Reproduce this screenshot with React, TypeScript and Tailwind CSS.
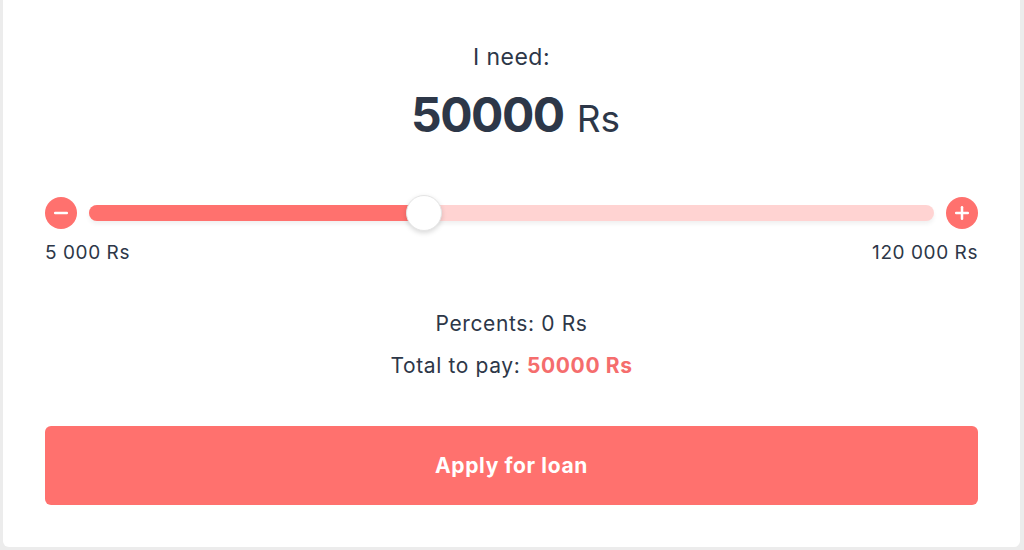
import { Minus, Plus } from "lucide-react";
import { useState } from "react";

const MIN = 5000;
const MAX = 120000;

const App = () => {
  const [amount, setAmount] = useState(50000);
  const pct = ((amount - MIN) / (MAX - MIN)) * 100;

  const step = (d: number) =>
    setAmount((a) => Math.min(MAX, Math.max(MIN, a + d)));

  return (
    <div className="min-h-[550px] bg-[#ececec] pl-[3px] pr-[4px] pb-[3px] font-['Inter',sans-serif] text-[#2d3748]">
      <div className="flex h-[547px] flex-col rounded-b-md bg-white px-[42px] pt-[43px]">
        {/* Amount */}
        <p className="text-center text-[23px] leading-[28px] tracking-[0.02em]">I need:</p>
        <p className="mt-[16px] pl-[8px] text-center leading-[56px]">
          <span className="text-[48px] font-bold tracking-[-1.5px]">{amount}</span>
          <span className="ml-[13px] text-[37px]">Rs</span>
        </p>

        {/* Slider */}
        <div className="mt-[41px] flex h-[36px] items-center gap-3">
          <button
            onClick={() => step(-5000)}
            className="flex h-8 w-8 shrink-0 items-center justify-center rounded-full bg-[#ff716e] text-white"
          >
            <Minus size={20} strokeWidth={3} />
          </button>
          <div className="relative h-4 flex-1 rounded-full bg-[#ffd3d2] shadow-[0_3px_4px_rgba(0,0,0,0.06)]">
            <div
              className="h-4 rounded-full bg-[#ff716e]"
              style={{ width: `calc(${pct}% + 4px)` }}
            />
            <div
              className="absolute top-1/2 h-[36px] w-[36px] -translate-x-1/2 -translate-y-1/2 rounded-full border border-[#e5e5e5] bg-white shadow-[0_2px_5px_rgba(0,0,0,0.15)]"
              style={{ left: `calc(${pct}% + 4px)` }}
            />
          </div>
          <button
            onClick={() => step(5000)}
            className="flex h-8 w-8 shrink-0 items-center justify-center rounded-full bg-[#ff716e] text-white"
          >
            <Plus size={20} strokeWidth={3} />
          </button>
        </div>
        <div className="mt-[10px] flex justify-between text-[19px] leading-[24px] tracking-[0.03em]">
          <span>5 000 Rs</span>
          <span>120 000 Rs</span>
        </div>

        {/* Summary */}
        <p className="mt-[45px] text-center text-[21px] leading-[28px] tracking-[0.03em]">
          Percents: 0 Rs
        </p>
        <p className="mt-[14px] text-center text-[21px] leading-[28px] tracking-[0.03em]">
          Total to pay:{" "}
          <span className="font-bold text-[#f56d6d]">{amount} Rs</span>
        </p>

        <button className="mt-[46px] h-[79px] w-full rounded-md bg-[#ff716e] text-[21px] font-bold tracking-[0.03em] text-white">
          Apply for loan
        </button>
      </div>
    </div>
  );
};

export default App;
